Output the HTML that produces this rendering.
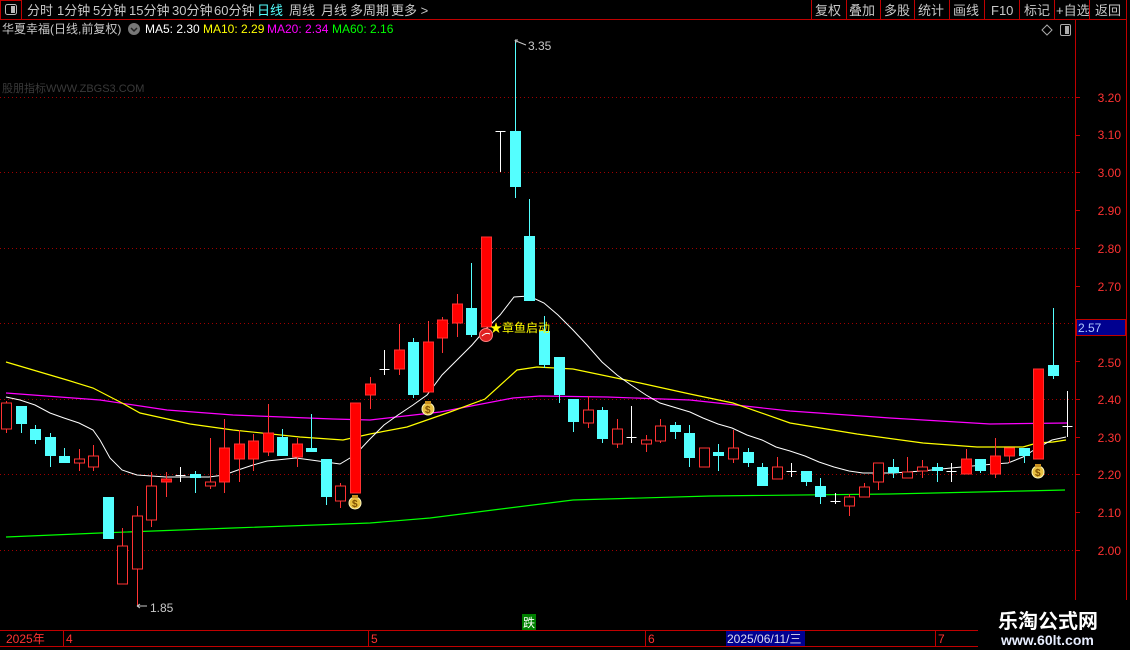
<!DOCTYPE html>
<html><head><meta charset="utf-8"><style>
html,body{margin:0;padding:0;background:#000;width:1130px;height:650px;overflow:hidden}
svg{display:block}
text{font-family:"Liberation Sans","Noto Sans CJK SC",sans-serif}
</style></head><body>
<svg id="s" width="1130" height="650" xmlns="http://www.w3.org/2000/svg">
<rect width="1130" height="650" fill="#000"/>
<!-- top bar -->
<line x1="0" y1="19.5" x2="1127" y2="19.5" stroke="#c00000"/>
<rect x="0.5" y="0.5" width="21" height="19" fill="none" stroke="#c00000"/>
<rect x="5.5" y="4.5" width="11" height="10" rx="2" fill="none" stroke="#bbb"/>
<rect x="11" y="6" width="4" height="7" fill="#bbb"/>
<g font-size="13" fill="#c8c8c8">
<text x="27" y="15">分时</text><text x="57" y="15">1分钟</text><text x="93" y="15">5分钟</text>
<text x="129" y="15">15分钟</text><text x="172" y="15">30分钟</text><text x="214" y="15">60分钟</text>
<text x="257" y="15" fill="#54ffff">日线</text><text x="289" y="15">周线</text><text x="321" y="15">月线</text>
<text x="350" y="15">多周期</text><text x="391" y="15">更多 &gt;</text>
<text x="815" y="15">复权</text><text x="849" y="15">叠加</text><text x="884" y="15">多股</text>
<text x="918" y="15">统计</text><text x="953" y="15">画线</text><text x="991" y="15">F10</text>
<text x="1024" y="15">标记</text><text x="1056" y="15">+自选</text><text x="1095" y="15">返回</text>
</g>
<g stroke="#c00000">
<line x1="811.5" y1="0" x2="811.5" y2="19"/><line x1="846.5" y1="0" x2="846.5" y2="19"/>
<line x1="880.5" y1="0" x2="880.5" y2="19"/><line x1="914.5" y1="0" x2="914.5" y2="19"/>
<line x1="949.5" y1="0" x2="949.5" y2="19"/><line x1="984.5" y1="0" x2="984.5" y2="19"/>
<line x1="1019.5" y1="0" x2="1019.5" y2="19"/><line x1="1054.5" y1="0" x2="1054.5" y2="19"/>
<line x1="1089.5" y1="0" x2="1089.5" y2="19"/><line x1="1126.5" y1="0" x2="1126.5" y2="650"/>
</g>
<!-- header line 2 -->
<g font-size="12">
<text x="2" y="33" fill="#c8c8c8">华夏幸福(日线,前复权)</text>
<circle cx="134" cy="29" r="6" fill="#777"/><path d="M131 28l3 3 3-3" stroke="#222" stroke-width="1.5" fill="none"/>
<text x="145" y="33" fill="#fff">MA5: 2.30</text>
<text x="203" y="33" fill="#ffff00">MA10: 2.29</text>
<text x="267" y="33" fill="#ff00ff">MA20: 2.34</text>
<text x="332" y="33" fill="#00ff00">MA60: 2.16</text>
</g>
<path d="M1047 25l5 5-5 5-5-5z" fill="none" stroke="#aaa"/>
<rect x="1060.5" y="24.5" width="10" height="11" rx="1.5" fill="none" stroke="#aaa"/><rect x="1065" y="26" width="4" height="8" fill="#aaa"/>
<text x="2" y="92" font-size="11" fill="#3a3a3a">股朋指标WWW.ZBGS3.COM</text>
<!-- grid -->
<g stroke="#a00000" stroke-dasharray="1,3">
<line x1="0" y1="97.5" x2="1074" y2="97.5"/><line x1="0" y1="172.5" x2="1074" y2="172.5"/>
<line x1="0" y1="248.5" x2="1074" y2="248.5"/><line x1="0" y1="323.5" x2="1074" y2="323.5"/>
<line x1="0" y1="399.5" x2="1074" y2="399.5"/><line x1="0" y1="474.5" x2="1074" y2="474.5"/>
<line x1="0" y1="550.5" x2="1074" y2="550.5"/>
</g>
<!-- right axis -->
<line x1="1075.5" y1="20" x2="1075.5" y2="630" stroke="#c00000"/>
<g font-size="12" fill="#ff3232" text-anchor="end">
<text x="1121" y="102">3.20</text><text x="1121" y="139">3.10</text><text x="1121" y="177">3.00</text>
<text x="1121" y="215">2.90</text><text x="1121" y="253">2.80</text><text x="1121" y="291">2.70</text>
<text x="1121" y="367">2.50</text><text x="1121" y="404">2.40</text><text x="1121" y="442">2.30</text>
<text x="1121" y="479">2.20</text><text x="1121" y="517">2.10</text><text x="1121" y="555">2.00</text>
</g>
<g stroke="#c00000">
<line x1="1075" y1="97.5" x2="1080" y2="97.5"/><line x1="1075" y1="135.5" x2="1080" y2="135.5"/>
<line x1="1075" y1="172.5" x2="1080" y2="172.5"/><line x1="1075" y1="210.5" x2="1080" y2="210.5"/>
<line x1="1075" y1="248.5" x2="1080" y2="248.5"/><line x1="1075" y1="286.5" x2="1080" y2="286.5"/>
<line x1="1075" y1="361.5" x2="1080" y2="361.5"/><line x1="1075" y1="399.5" x2="1080" y2="399.5"/>
<line x1="1075" y1="437.5" x2="1080" y2="437.5"/><line x1="1075" y1="474.5" x2="1080" y2="474.5"/>
<line x1="1075" y1="512.5" x2="1080" y2="512.5"/><line x1="1075" y1="550.5" x2="1080" y2="550.5"/>
</g>
<rect x="1076.5" y="319.5" width="49" height="16" fill="#000090" stroke="#c00000"/>
<text x="1078" y="332" font-size="12" fill="#b0c8ff">2.57</text>
<!-- MA lines -->
<polyline fill="none" stroke="#00ff00" stroke-width="1.2" points="6,537 100,533 233,528 370,523 430,518 493,510 573,500 710,496 890,494 1023,491 1065,490"/>
<polyline fill="none" stroke="#ff00ff" stroke-width="1.2" points="6,393 100,400 167,410 233,415 333,419 370,420 440,412 513,398 540,396 607,397 690,400 790,411 890,418 990,424 1067,423"/>
<polyline fill="none" stroke="#ffff00" stroke-width="1.2" points="6,362 50,375 67,380 93,388 122,403 140,413 190,424 233,430 300,437 343,440 370,434 407,427 450,412 485,399 517,370 537,367 573,369 640,383 690,394 733,403 790,423 857,434 923,443 977,447 1023,447 1037,443 1053,442 1066,440"/>
<polyline fill="none" stroke="#ffffff" stroke-width="1" points="6,397 20,400 35,405 50,413 64,418 79,423 93,430 100,440 110,458 122,470 137,475 166,477 209,477 224,475 238,470 253,465 267,461 296,458 311,460 340,464 355,455 369,440 384,425 398,415 413,405 427,395 442,375 457,360 472,345 485,330 500,315 514,297 529,296 544,303 558,315 573,330 587,345 602,362 617,375 631,385 646,395 660,403 690,412 703,418 718,424 732,428 747,435 762,440 776,447 790,451 805,456 819,462 834,467 849,471 863,473 893,473 922,471 951,468 994,464 1008,463 1023,457 1037,448 1052,440 1066,437"/>
<g id="c"></g>
<!-- annotations -->
<g font-size="12" fill="#c8c8c8">
<path d="M515 40l3 0M515 40l1 3M516 41l10 4" stroke="#c8c8c8" fill="none"/>
<text x="528" y="50">3.35</text>
<path d="M137 606l10 0M137 606l3-2M137 606l3 2" stroke="#c8c8c8" fill="none"/>
<text x="150" y="612">1.85</text>
</g>
<text x="490" y="332" font-size="12" fill="#ffff00">★章鱼启动</text>
<circle cx="486" cy="335" r="6.5" fill="#e02020" stroke="#ff8080"/><path d="M482 336q4-4 8-2" stroke="#fff" fill="none"/>
<rect x="522" y="614" width="14" height="16" fill="#008000"/>
<text x="523" y="627" font-size="12" fill="#fff">跌</text>
<!-- date bar -->
<line x1="0" y1="630.5" x2="1127" y2="630.5" stroke="#c00000"/>
<line x1="0" y1="646.5" x2="1127" y2="646.5" stroke="#c00000"/>
<g stroke="#c00000"><line x1="63.5" y1="630" x2="63.5" y2="646"/><line x1="368.5" y1="630" x2="368.5" y2="646"/><line x1="645.5" y1="630" x2="645.5" y2="646"/><line x1="935.5" y1="630" x2="935.5" y2="646"/></g>
<g font-size="12" fill="#ff3232">
<text x="6" y="643">2025年</text><text x="66" y="643">4</text><text x="371" y="643">5</text><text x="648" y="643">6</text><text x="938" y="643">7</text>
</g>
<rect x="726" y="631" width="79" height="15" fill="#000090"/>
<text x="727" y="643" font-size="12" fill="#dde">2025/06/11/三</text>
<rect x="978" y="600" width="152" height="50" fill="#000"/>
<text x="998" y="628" font-size="20" font-weight="bold" fill="#fff" font-family="Liberation Serif,Noto Serif CJK SC,serif">乐淘公式网</text>
<text x="1001" y="645" font-size="14" font-weight="bold" fill="#e8eeff" font-family="Liberation Serif,serif">www.60lt.com</text>
</svg>
<script>
var d=[
['r',403,429,401,433],['c',406,424,406,433],['c',429,440,425,444],['c',437,456,433,467],['c',456,463,448,463],
['r',459,463,449,471],['r',456,467,445,471],['c',497,539,497,539],['r',546,584,528,584],['r',516,569,506,606],
['r',486,520,472,527],['R',479,482,472,497],['w',475,475,467,482],['c',474,478,471,493],['r',482,486,438,489],
['R',448,482,419,493],['R',444,459,430,482],['R',441,459,434,471],['R',433,452,404,456],['c',437,456,429,456],
['R',444,457,438,467],['c',448,452,414,452],['c',459,497,459,505],['r',486,501,483,508],['R',403,493,403,493],
['R',384,395,377,409],['w',369,369,350,375],['R',350,369,324,375],['c',342,395,338,398],['R',342,392,321,392],
['R',320,338,317,353],['R',304,323,294,337],['c',308,335,263,337],['R',237,327,237,327],['w',131,131,131,172],
['c',131,187,40,198],['c',236,301,199,301],['c',331,365,316,368],['c',357,395,357,403],['c',399,422,399,432],
['r',410,423,396,428],['c',410,439,407,443],['r',429,444,419,448],['w',437,437,406,443],['r',440,444,435,452],
['r',426,441,419,443],['c',425,432,422,439],['c',433,458,425,467],['r',448,467,448,467],['c',452,456,444,471],
['r',448,459,430,463],['c',452,463,448,467],['c',467,486,463,486],['r',467,479,457,479],['w',471,471,463,477],
['c',471,482,471,486],['c',486,497,478,504],['w',501,501,493,504],['r',497,506,494,516],['r',487,497,483,497],
['r',463,482,463,490],['c',467,473,459,478],['r',472,478,457,478],['r',467,471,460,478],['c',467,471,463,482],
['w',471,471,463,482],['R',459,474,449,474],['c',459,471,459,473],['R',456,474,438,478],['R',448,456,448,463],
['c',448,456,448,463],['R',369,459,369,459],['c',365,376,308,379],['w',426,426,391,437]];
var h='',NS='';
d.forEach(function(a,i){
 var x=Math.round(6+i*14.54)+0.5,t=a[0],col=t=='c'?'#54ffff':(t=='w'?'#ffffff':'#ff3232');
 h+='<line x1="'+x+'" y1="'+a[3]+'" x2="'+x+'" y2="'+a[4]+'" stroke="'+col+'"/>';
 if(t=='w'){h+='<line x1="'+(x-5)+'" y1="'+(a[1]+.5)+'" x2="'+(x+5)+'" y2="'+(a[1]+.5)+'" stroke="#fff"/>';}
 else if(t=='c'){h+='<rect x="'+(x-5.5)+'" y="'+a[1]+'" width="11" height="'+Math.max(1,a[2]-a[1])+'" fill="#54ffff"/>';}
 else if(t=='r'){h+='<rect x="'+(x-5)+'" y="'+a[1]+'" width="10" height="'+Math.max(1,a[2]-a[1])+'" fill="#000" stroke="#ff3232"/>';}
 else {h+='<rect x="'+(x-5)+'" y="'+a[1]+'" width="10" height="'+Math.max(1,a[2]-a[1])+'" fill="#ff0000" stroke="#ff3232"/>';}
});
function bag(x,y){return '<circle cx="'+x+'" cy="'+(y+1)+'" r="6" fill="#e8c040" stroke="#fff8c0"/><rect x="'+(x-3)+'" y="'+(y-7)+'" width="6" height="3" fill="#c89020"/><text x="'+(x-3)+'" y="'+(y+5)+'" font-size="10" font-weight="bold" fill="#805000">$</text>';}
h+=bag(355,502)+bag(428,408)+bag(1038,471);
document.getElementById('c').innerHTML=h;
</script>
</body></html>
